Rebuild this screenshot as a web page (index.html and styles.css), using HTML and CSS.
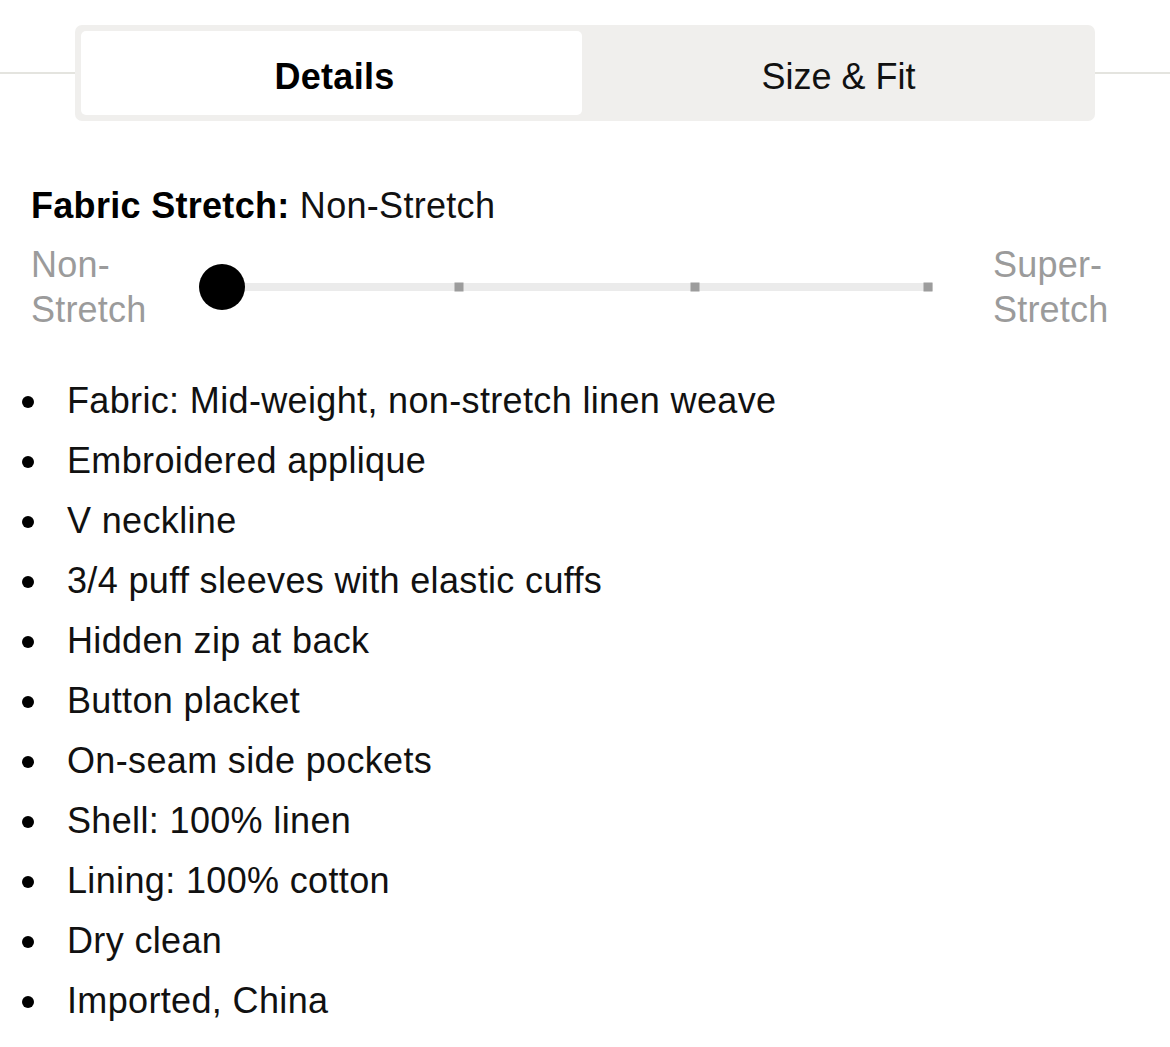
FILE: index.html
```html
<!DOCTYPE html>
<html lang="en">
<head>
<meta charset="utf-8">
<title>Details</title>
<link rel="stylesheet" href="styles.css">
</head>
<body>
<div class="tabbar">
  <div class="rule"></div>
  <div class="tabs">
    <div class="tab active">Details</div>
    <div class="tab">Size &amp; Fit</div>
  </div>
  <div class="rule"></div>
</div>

<section class="content">
  <h2 class="stretch-title"><strong>Fabric Stretch:</strong> Non-Stretch</h2>
  <div class="scale">
    <div class="scale-label left">Non-<br>Stretch</div>
    <div class="slider">
      <div class="track">
        <span class="tick t1"></span>
        <span class="tick t2"></span>
        <span class="tick t3"></span>
        <span class="knob"></span>
      </div>
    </div>
    <div class="scale-label right">Super-<br>Stretch</div>
  </div>

  <ul class="features">
    <li>Fabric: Mid-weight, non-stretch linen weave</li>
    <li>Embroidered applique</li>
    <li>V neckline</li>
    <li>3/4 puff sleeves with elastic cuffs</li>
    <li>Hidden zip at back</li>
    <li>Button placket</li>
    <li>On-seam side pockets</li>
    <li>Shell: 100% linen</li>
    <li>Lining: 100% cotton</li>
    <li>Dry clean</li>
    <li>Imported, China</li>
  </ul>
</section>
</body>
</html>
```

FILE: styles.css
```css
* { box-sizing: border-box; }

html, body {
  margin: 0;
  padding: 0;
  background: #ffffff;
  color: #0a0a0a;
  font-family: "Liberation Sans", Arial, sans-serif;
}

.tabbar {
  display: flex;
  align-items: center;
  padding-top: 25px;
}

.rule {
  flex: 1;
  height: 2px;
  background: #e4e4df;
}

.tabs {
  width: 1020px;
  height: 96px;
  display: grid;
  grid-template-columns: 1fr 1fr;
  gap: 6px;
  padding: 6px;
  background: #f0efed;
  border-radius: 7px;
}

.tab {
  display: flex;
  align-items: center;
  justify-content: center;
  font-size: 36px;
  color: #111;
  padding-top: 8px;
}

.tab.active {
  background: #ffffff;
  border-radius: 5px;
  font-weight: 700;
  color: #000;
  padding-left: 6px;
  letter-spacing: 0.3px;
}

.content {
  padding-left: 31px;
}

.stretch-title {
  margin: 63px 0 0 0;
  font-size: 36px;
  line-height: 44px;
  font-weight: 400;
  color: #111;
  letter-spacing: 0.3px;
}

.stretch-title strong {
  font-weight: 700;
  color: #000;
}

.scale {
  display: flex;
  align-items: center;
  margin-top: 14px;
}

.scale-label {
  font-size: 36px;
  line-height: 45px;
  color: #9b9b9b;
  letter-spacing: 0.2px;
}

.scale-label.left {
  width: 169px;
}

.scale-label.right {
  margin-left: 43px;
}

.slider {
  width: 750px;
  padding: 0 22px;
}

.track {
  position: relative;
  height: 8px;
  background: #ebebeb;
  margin-right: -5px;
}

.tick {
  position: absolute;
  top: 50%;
  width: 9px;
  height: 9px;
  background: #9c9c9c;
  transform: translate(-50%, -50%);
}

.t1 { left: 33.4%; }
.t2 { left: 66.5%; }
.t3 { left: calc(100% - 5px); }

.knob {
  position: absolute;
  left: 0;
  top: 50%;
  width: 46px;
  height: 46px;
  border-radius: 50%;
  background: #000;
  transform: translate(-50%, -50%);
}

.features {
  list-style: none;
  margin: 39px 0 0 -9px;
  padding: 0;
}

.features li {
  display: flex;
  align-items: center;
  font-size: 36px;
  line-height: 60px;
  color: #111;
  letter-spacing: 0.35px;
}

.features li::before {
  content: "";
  flex: 0 0 12px;
  width: 12px;
  height: 12px;
  border-radius: 50%;
  background: #000;
  margin-right: 33px;
  margin-top: 2px;
}
```
